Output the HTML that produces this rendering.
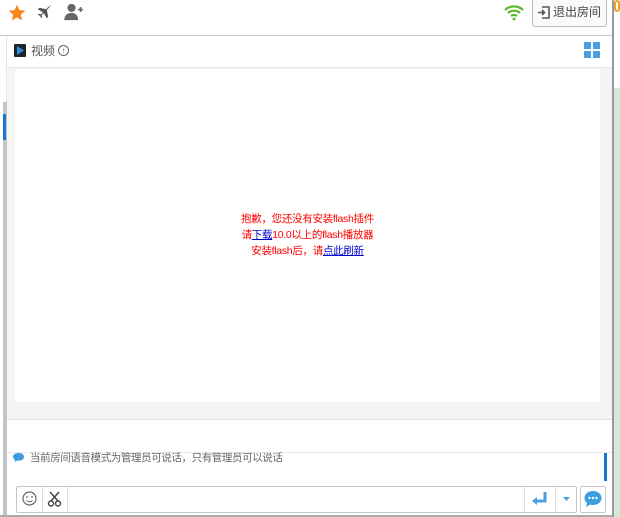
<!DOCTYPE html>
<html><head><meta charset="utf-8"><style>
*{margin:0;padding:0;box-sizing:border-box}
body{width:620px;height:517px;overflow:hidden;background:#fff;position:relative;font-family:"Liberation Sans","Noto Sans CJK SC",sans-serif;font-size:12px}
.a{position:absolute}
</style></head><body>
<div class="a" style="left:612px;top:0;width:2px;height:517px;background:#9a9a9a"></div>
<div class="a" style="left:614px;top:0;width:6px;height:517px;background:#fff"></div>
<div class="a" style="left:614px;top:88px;width:6px;height:429px;background:#d3ead7"></div>
<div class="a" style="left:614px;top:0;width:6px;height:12px;border:2px solid #f0a020;border-radius:6px"></div>
<svg class="a" style="left:8px;top:4px" width="18" height="18" viewBox="0 0 24 24"><path d="M12 1l3.3 7.2 7.7.7-5.9 5.2 1.8 7.7L12 17.8 5.1 21.8l1.8-7.7L1 8.9l7.7-.7z" fill="#f7861b"/></svg>
<svg class="a" style="left:35px;top:4px" width="19" height="18" viewBox="0 0 24 24"><path d="M21 3c-1-1-3 0-4 1l-3 3-9-2-2 2 7 4-3 3-3-1-1 1 3 2 2 3 1-1-1-3 3-3 4 7 2-2-2-9 3-3c1-1 2-3 1-4z" fill="#555"/></svg>
<svg class="a" style="left:64px;top:3px" width="20" height="18" viewBox="0 0 24 22"><circle cx="9" cy="6" r="5" fill="#666"/><path d="M0 21c0-6 4-9 9-9s8 3 8 9z" fill="#666"/><path d="M17 8h6M20 5v6" stroke="#666" stroke-width="2"/></svg>
<svg class="a" style="left:504px;top:4px" width="20" height="17" viewBox="0 0 20 17"><path d="M1 6a13 13 0 0 1 18 0M4 9a9 9 0 0 1 12 0M7 12a5 5 0 0 1 6 0" stroke="#5cb82a" stroke-width="2.2" fill="none"/><circle cx="10" cy="15" r="1.5" fill="#5cb82a"/></svg>
<div class="a" style="left:532px;top:0;width:75px;height:27px;border:1px solid #bbb;border-top:none;border-radius:0 0 3px 3px;background:#fafafa;color:#444;font-size:12px;line-height:25px;padding-left:20px">退出房间</div>
<svg class="a" style="left:538px;top:6px" width="12" height="13" viewBox="0 0 12 13"><path d="M4 1h7v11H4" stroke="#555" stroke-width="1.6" fill="none"/><path d="M0 6.5h6M4 4l2.5 2.5L4 9" stroke="#555" stroke-width="1.6" fill="none"/></svg>
<div class="a" style="left:0;top:35px;width:612px;height:1px;background:#c8c8c8"></div>
<div class="a" style="left:6px;top:36px;width:1px;height:481px;background:#e6e6e6"></div>
<div class="a" style="left:3px;top:102px;width:4px;height:415px;background:#c4c4c4"></div>
<div class="a" style="left:3px;top:114px;width:3px;height:26px;background:#1878d0"></div>
<div class="a" style="left:14px;top:44px;width:12px;height:13px;background:#222;border-radius:1px"></div>
<svg class="a" style="left:16px;top:46px" width="8" height="9"><path d="M1 0l7 4.5L1 9z" fill="#2a8de0"/></svg>
<div class="a" style="left:31px;top:43px;color:#555;font-size:12px;line-height:16px">视频</div>
<div class="a" style="left:58px;top:45px;width:11px;height:11px;border:1px solid #666;border-radius:50%;font-size:8px;line-height:9px;text-align:center;color:#555">↑</div>
<div class="a" style="left:584px;top:42px;width:7px;height:7px;background:#4a9fe0"></div>
<div class="a" style="left:593px;top:42px;width:7px;height:7px;background:#4a9fe0"></div>
<div class="a" style="left:584px;top:51px;width:7px;height:7px;background:#4a9fe0"></div>
<div class="a" style="left:593px;top:51px;width:7px;height:7px;background:#4a9fe0"></div>
<div class="a" style="left:7px;top:67px;width:605px;height:353px;background:#f4f4f4;border-top:1px solid #e8e8e8"></div>
<div class="a" style="left:15px;top:69px;width:585px;height:333px;background:#fff"></div>
<div class="a" style="left:15px;top:211px;width:585px;text-align:center;color:#f00;font-size:10.5px;letter-spacing:-0.3px;line-height:16px">抱歉，您还没有安装flash插件<br>请<u style="color:#00c">下载</u>10.0以上的flash播放器<br>安装flash后，请<u style="color:#00c">点此刷新</u></div>
<div class="a" style="left:7px;top:419px;width:605px;height:1px;background:#e2e2e2"></div>
<div class="a" style="left:7px;top:452px;width:605px;height:1px;background:#e8e8e8"></div>
<svg class="a" style="left:13px;top:453px" width="11" height="9"><path d="M5.5 0C2.5 0 0 1.5 0 3.8c0 1.3.8 2.3 2 3L1.5 9 4.5 7.5C8.5 8 11 6.5 11 3.8 11 1.5 8.5 0 5.5 0z" fill="#3a9ee0"/></svg>
<div class="a" style="left:30px;top:451px;color:#666;font-size:10.5px;letter-spacing:-0.4px;line-height:15px">当前房间语音模式为管理员可说话，只有管理员可以说话</div>
<div class="a" style="left:604px;top:453px;width:3px;height:28px;background:#1878d0"></div>
<div class="a" style="left:16px;top:486px;width:561px;height:27px;border:1px solid #c6c6c6;border-radius:2px;background:#fff"></div>
<div class="a" style="left:42px;top:487px;width:1px;height:25px;background:#ddd"></div>
<div class="a" style="left:67px;top:487px;width:1px;height:25px;background:#ddd"></div>
<div class="a" style="left:524px;top:487px;width:1px;height:25px;background:#ddd"></div>
<div class="a" style="left:555px;top:487px;width:1px;height:25px;background:#ddd"></div>
<svg class="a" style="left:22px;top:491px" width="16" height="16" viewBox="0 0 16 16"><circle cx="7.5" cy="7.5" r="6.5" stroke="#666" fill="none" stroke-width="1.2"/><circle cx="5" cy="6" r=".9" fill="#666"/><circle cx="10" cy="6" r=".9" fill="#666"/><path d="M4.5 9.5q3 2.5 6 0" stroke="#666" fill="none"/></svg>
<svg class="a" style="left:47px;top:491px" width="15" height="16" viewBox="0 0 15 16"><path d="M3 1l8 9M12 1L4 10" stroke="#444" stroke-width="1.5"/><circle cx="4" cy="12.5" r="2.5" stroke="#444" fill="none" stroke-width="1.4"/><circle cx="11" cy="12.5" r="2.5" stroke="#444" fill="none" stroke-width="1.4"/></svg>
<svg class="a" style="left:532px;top:492px" width="16" height="14"><path d="M13 0v9H4" stroke="#4a9fe0" stroke-width="3" fill="none"/><path d="M0 9l5-4v8z" fill="#4a9fe0"/></svg>
<svg class="a" style="left:563px;top:497px" width="7" height="4"><path d="M0 0h7L3.5 4z" fill="#4a9fe0"/></svg>
<div class="a" style="left:580px;top:486px;width:26px;height:27px;border:1px solid #c6c6c6;border-radius:2px;background:#fff"></div>
<svg class="a" style="left:584px;top:491px" width="18" height="16" viewBox="0 0 18 16"><ellipse cx="9" cy="7" rx="8.5" ry="7" fill="#3a9ee0"/><path d="M3 12l-1 4 5-3z" fill="#3a9ee0"/><circle cx="5.5" cy="7" r="1.2" fill="#fff"/><circle cx="9" cy="7" r="1.2" fill="#fff"/><circle cx="12.5" cy="7" r="1.2" fill="#fff"/></svg>
<div class="a" style="left:0;top:515px;width:612px;height:2px;background:#aaa"></div>
</body></html>
